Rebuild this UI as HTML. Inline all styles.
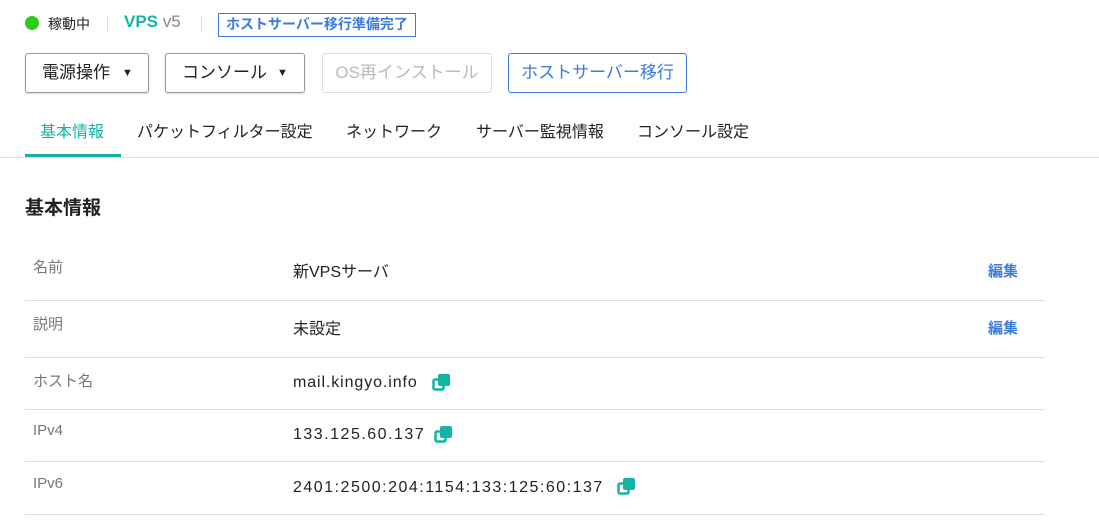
<!DOCTYPE html>
<html><head><meta charset="utf-8"><style>
body{margin:0;width:1099px;height:523px;background:#fff;font-family:"Liberation Sans","Noto Sans CJK JP",sans-serif;color:#222;position:relative;overflow:hidden}
.a{position:absolute;white-space:nowrap}
.btn{position:absolute;top:53px;height:38px;border:1px solid #999;border-radius:3px;box-shadow:0 1px 2px rgba(0,0,0,.15);font-size:17px;line-height:38px;box-sizing:content-box}
.tab{position:absolute;top:118px;font-size:16px;color:#222}
.lbl{position:absolute;left:33px;font-size:15px;color:#777}
.val{position:absolute;left:293px;font-size:16px;color:#222;white-space:nowrap}
.hr{position:absolute;left:25px;width:1020px;height:1px;background:#ddd}
.ed{position:absolute;left:988px;font-size:15px;color:#3a7be0;font-weight:bold}
.cp{position:absolute;width:19px;height:19px}
</style></head><body>
<div class="a" style="left:25px;top:16px;width:14px;height:14px;border-radius:50%;background:#2ecc1a"></div>
<div class="a" style="left:48px;top:14px;font-size:14px">稼動中</div>
<div class="a" style="left:107px;top:15px;width:1px;height:17px;background:#ddd"></div>
<div class="a" style="left:124px;top:12px;font-size:17px;font-weight:bold;color:#14b3a3">VPS <span style="font-weight:normal;color:#888">v5</span></div>
<div class="a" style="left:201px;top:15px;width:1px;height:17px;background:#ddd"></div>
<div class="a" style="left:218px;top:13px;height:22px;padding:0 7px;border:1px solid #3a7be0;color:#3a7be0;font-size:14px;font-weight:bold;line-height:21px">ホストサーバー移行準備完了</div>

<div class="btn" style="left:25px;width:122px"><span style="margin-left:16px">電源操作</span><span style="position:absolute;left:96px;font-size:11px">▼</span></div>
<div class="btn" style="left:165px;width:138px"><span style="margin-left:16px">コンソール</span><span style="position:absolute;left:111px;font-size:11px">▼</span></div>
<div class="btn" style="left:322px;width:168px;border-color:#ddd;color:#bbb;box-shadow:none;text-align:center">OS再インストール</div>
<div class="btn" style="left:508px;width:177px;border-color:#3a7be0;color:#3a7be0;text-align:center;box-shadow:none">ホストサーバー移行</div>

<div class="tab" style="left:40px;color:#14b3a3">基本情報</div>
<div class="tab" style="left:137px">パケットフィルター設定</div>
<div class="tab" style="left:346px">ネットワーク</div>
<div class="tab" style="left:476px">サーバー監視情報</div>
<div class="tab" style="left:637px">コンソール設定</div>
<div class="a" style="left:0;top:157px;width:1099px;height:1px;background:#ddd"></div>
<div class="a" style="left:25px;top:154px;width:96px;height:3px;background:#14b3a3"></div>

<div class="a" style="left:25px;top:193px;font-size:19px;font-weight:bold">基本情報</div>

<div class="lbl" style="top:256px">名前</div><div class="val" style="top:258px">新VPSサーバ</div><div class="ed" style="top:260px">編集</div>
<div class="hr" style="top:300px"></div>
<div class="lbl" style="top:313px">説明</div><div class="val" style="top:315px">未設定</div><div class="ed" style="top:317px">編集</div>
<div class="hr" style="top:357px"></div>
<div class="lbl" style="top:370px">ホスト名</div><div class="val" style="top:374px;letter-spacing:0.9px">mail.kingyo.info</div>
<svg class="cp" style="left:432px;top:373px" viewBox="0 0 19 19"><rect x="1.5" y="6.5" width="10" height="10" rx="1.5" fill="none" stroke="#14b3a3" stroke-width="2.5"/><rect x="6" y="1" width="12" height="12" rx="2" fill="#14b3a3"/></svg>
<div class="hr" style="top:409px"></div>
<div class="lbl" style="top:422px">IPv4</div><div class="val" style="top:426px;letter-spacing:1.5px">133.125.60.137</div>
<svg class="cp" style="left:434px;top:425px" viewBox="0 0 19 19"><rect x="1.5" y="6.5" width="10" height="10" rx="1.5" fill="none" stroke="#14b3a3" stroke-width="2.5"/><rect x="6" y="1" width="12" height="12" rx="2" fill="#14b3a3"/></svg>
<div class="hr" style="top:461px"></div>
<div class="lbl" style="top:475px">IPv6</div><div class="val" style="top:479px;letter-spacing:1.5px">2401:2500:204:1154:133:125:60:137</div>
<svg class="cp" style="left:617px;top:477px" viewBox="0 0 19 19"><rect x="1.5" y="6.5" width="10" height="10" rx="1.5" fill="none" stroke="#14b3a3" stroke-width="2.5"/><rect x="6" y="1" width="12" height="12" rx="2" fill="#14b3a3"/></svg>
<div class="hr" style="top:514px"></div>
</body></html>
